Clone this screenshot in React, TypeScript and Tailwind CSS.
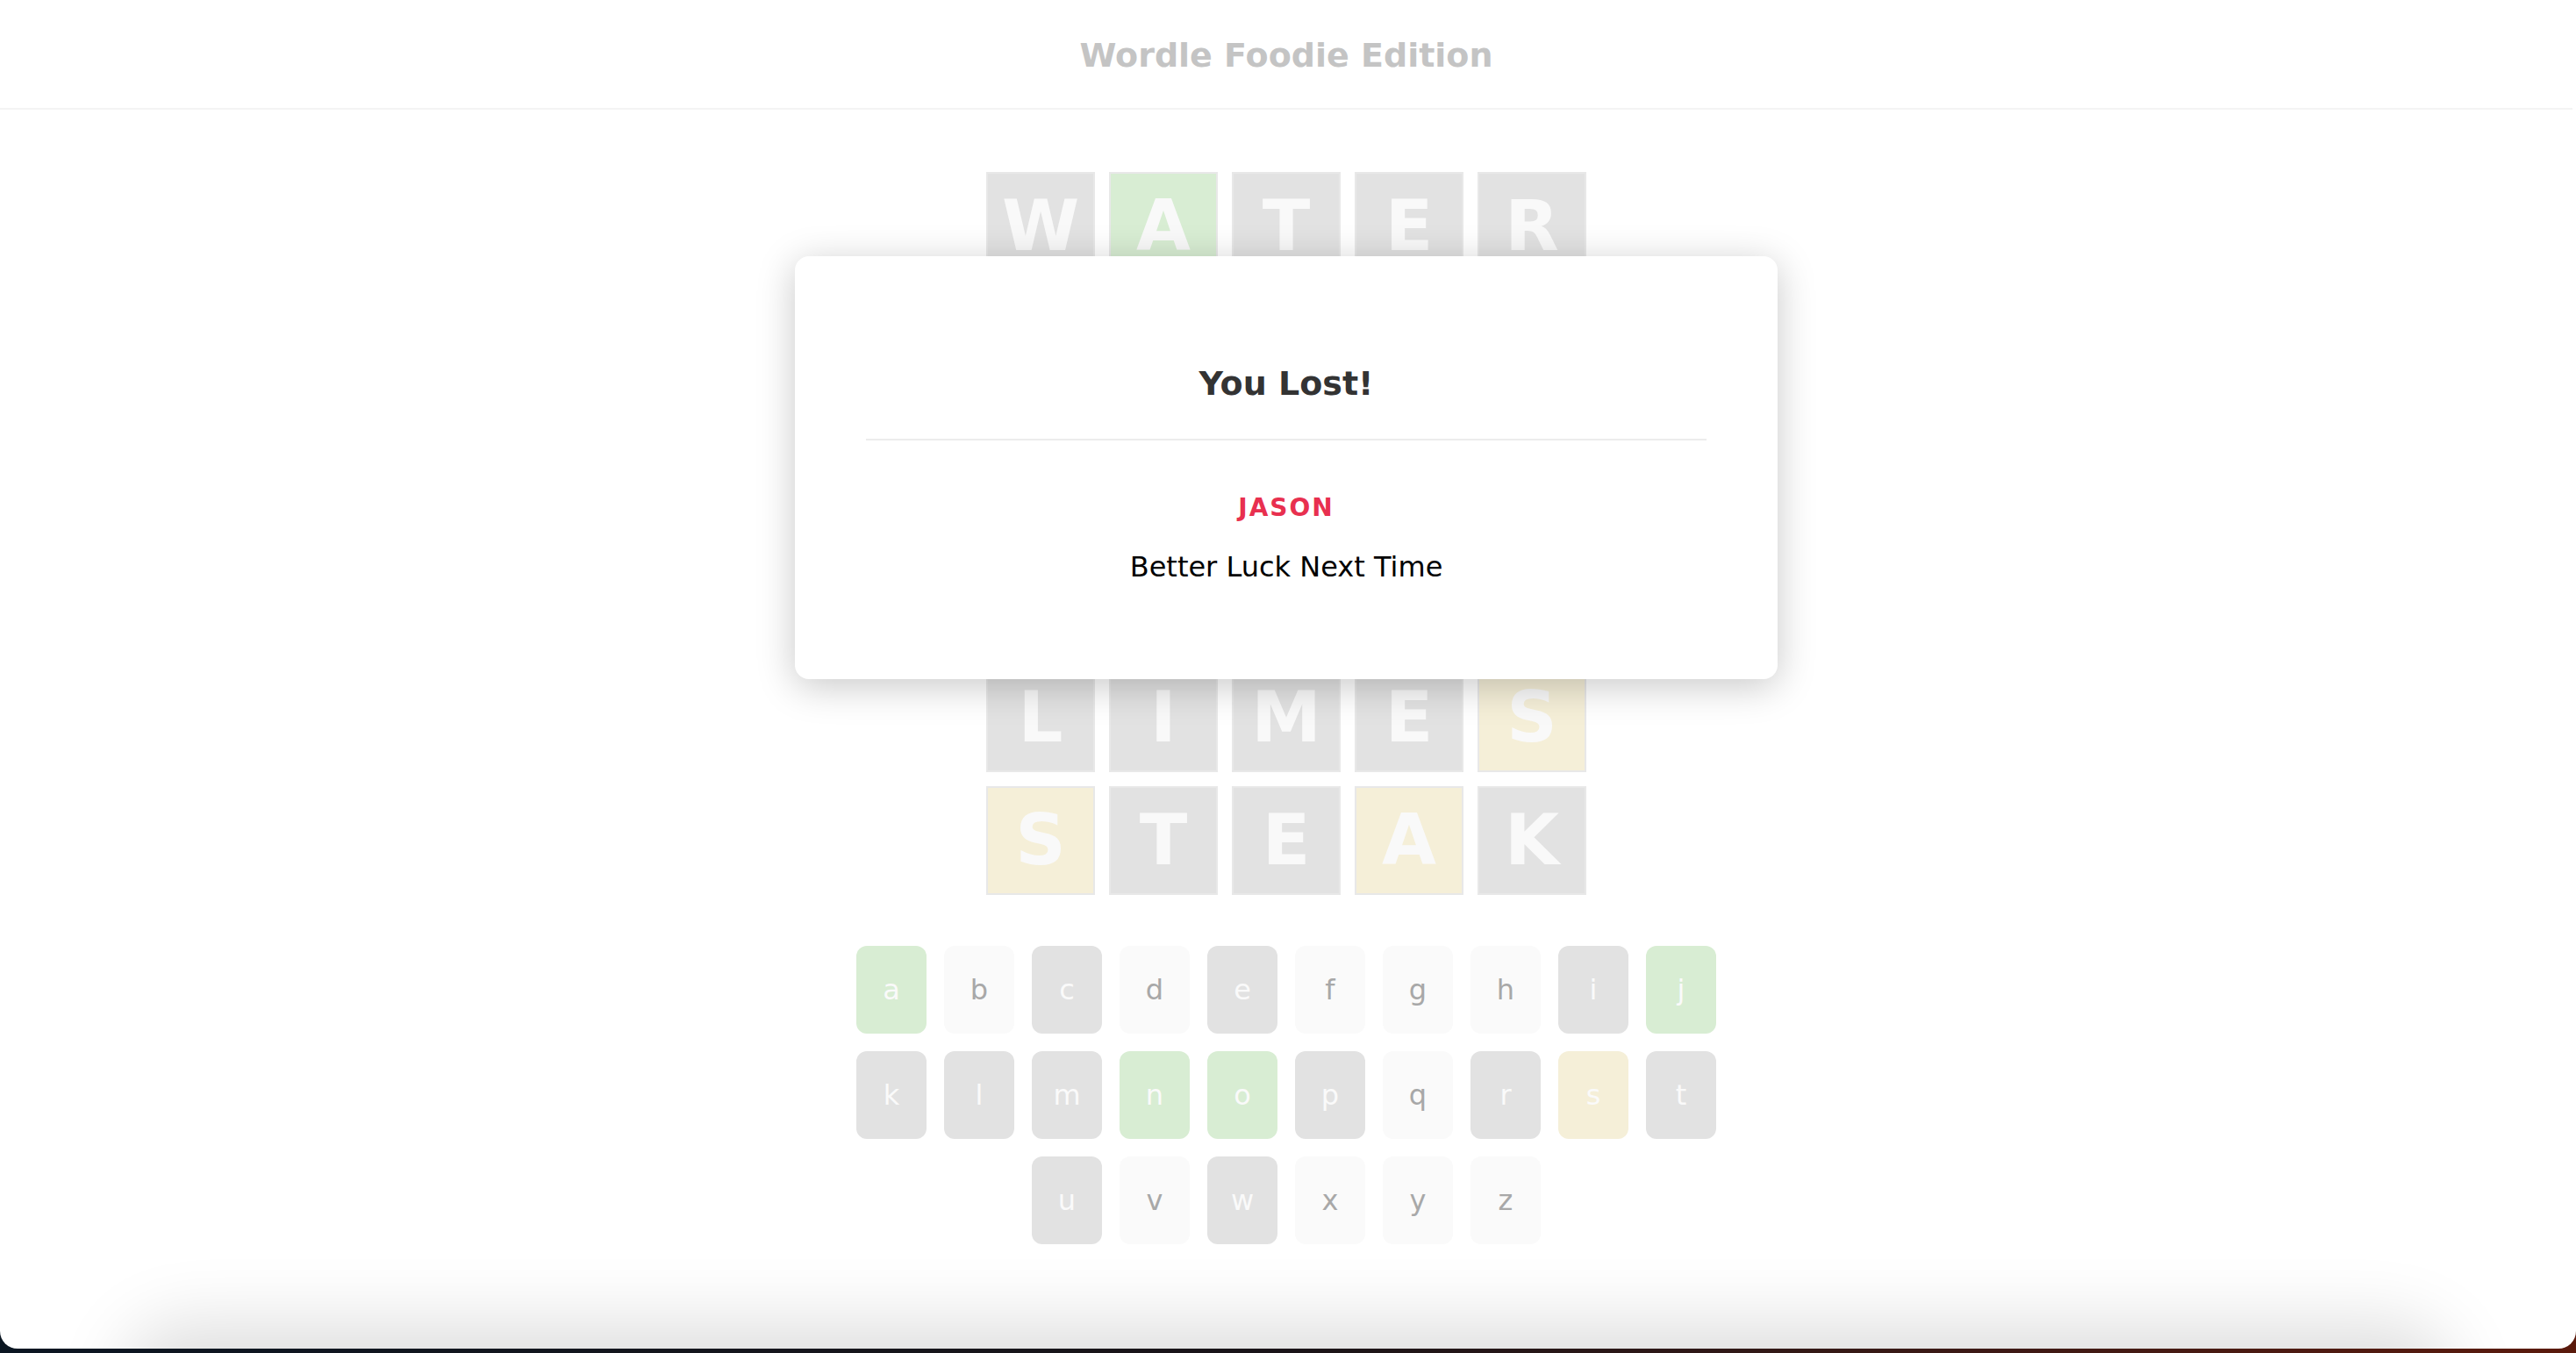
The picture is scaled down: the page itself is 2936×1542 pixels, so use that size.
type TileState = 'absent' | 'correct' | 'present';
type KeyState = 'unused' | 'absent' | 'correct' | 'present';

const guesses: { letter: string; state: TileState }[][] = [
    [
        { letter: 'W', state: 'absent' },
        { letter: 'A', state: 'correct' },
        { letter: 'T', state: 'absent' },
        { letter: 'E', state: 'absent' },
        { letter: 'R', state: 'absent' },
    ],
    [
        { letter: 'C', state: 'absent' },
        { letter: 'U', state: 'absent' },
        { letter: 'P', state: 'absent' },
        { letter: 'O', state: 'correct' },
        { letter: 'N', state: 'correct' },
    ],
    [
        { letter: 'J', state: 'correct' },
        { letter: 'A', state: 'correct' },
        { letter: 'M', state: 'absent' },
        { letter: 'O', state: 'correct' },
        { letter: 'N', state: 'correct' },
    ],
    [
        { letter: 'P', state: 'absent' },
        { letter: 'I', state: 'absent' },
        { letter: 'L', state: 'absent' },
        { letter: 'E', state: 'absent' },
        { letter: 'S', state: 'present' },
    ],
    [
        { letter: 'L', state: 'absent' },
        { letter: 'I', state: 'absent' },
        { letter: 'M', state: 'absent' },
        { letter: 'E', state: 'absent' },
        { letter: 'S', state: 'present' },
    ],
    [
        { letter: 'S', state: 'present' },
        { letter: 'T', state: 'absent' },
        { letter: 'E', state: 'absent' },
        { letter: 'A', state: 'present' },
        { letter: 'K', state: 'absent' },
    ],
];

const keyRows: { key: string; state: KeyState }[][] = [
    [
        { key: 'a', state: 'correct' },
        { key: 'b', state: 'unused' },
        { key: 'c', state: 'absent' },
        { key: 'd', state: 'unused' },
        { key: 'e', state: 'absent' },
        { key: 'f', state: 'unused' },
        { key: 'g', state: 'unused' },
        { key: 'h', state: 'unused' },
        { key: 'i', state: 'absent' },
        { key: 'j', state: 'correct' },
    ],
    [
        { key: 'k', state: 'absent' },
        { key: 'l', state: 'absent' },
        { key: 'm', state: 'absent' },
        { key: 'n', state: 'correct' },
        { key: 'o', state: 'correct' },
        { key: 'p', state: 'absent' },
        { key: 'q', state: 'unused' },
        { key: 'r', state: 'absent' },
        { key: 's', state: 'present' },
        { key: 't', state: 'absent' },
    ],
    [
        { key: 'u', state: 'absent' },
        { key: 'v', state: 'unused' },
        { key: 'w', state: 'absent' },
        { key: 'x', state: 'unused' },
        { key: 'y', state: 'unused' },
        { key: 'z', state: 'unused' },
    ],
];

const tileBg: Record<TileState, string> = {
    absent: 'bg-[#e2e2e2]',
    correct: 'bg-[#d8edd3]',
    present: 'bg-[#f5efd8]',
};

const keyStyle: Record<KeyState, string> = {
    unused: 'bg-[#fafafa] text-[#a8a8a8]',
    absent: 'bg-[#e2e2e2] text-[#fafafa]',
    correct: 'bg-[#d8edd3] text-[#fafafa]',
    present: 'bg-[#f5efd8] text-[#fafafa]',
};

function Tile({ letter, state }: { letter: string; state: TileState }) {
    return (
        <div
            className={`w-[124px] h-[124px] border-2 border-[#e8e8e8] flex items-center justify-center text-[80px] font-bold text-[#f9f9f9] ${tileBg[state]}`}
        >
            {letter}
        </div>
    );
}

function Key({ label, state }: { label: string; state: KeyState }) {
    return (
        <div
            className={`w-[80px] h-[100px] rounded-[12px] flex items-center justify-center text-[32px] ${keyStyle[state]}`}
        >
            {label}
        </div>
    );
}

function App() {
    return (
        <div className="h-[1542px] w-full bg-gradient-to-r from-[#0b1622] via-[#1a1418] to-[#5b1a0c] overflow-hidden">
            <div
                className="relative h-[1537px] w-full bg-white rounded-b-[20px] overflow-hidden"
                style={{ fontFamily: '"DejaVu Sans", Verdana, sans-serif' }}
            >
                <div className="pr-[4px]">
                    <header className="h-[125px] pt-[4px] border-b-2 border-[#f4f4f4] flex items-center justify-center">
                        <h1 className="text-[38px] font-bold text-[#c4c4c4]">Wordle Foodie Edition</h1>
                    </header>

                    <div className="pt-[71px] flex flex-col items-center gap-[16px]">
                        {guesses.map((row, r) => (
                            <div key={r} className="flex gap-[16px]">
                                {row.map((t, i) => (
                                    <Tile key={i} letter={t.letter} state={t.state} />
                                ))}
                            </div>
                        ))}
                    </div>

                    <div className="mt-[58px] flex flex-col items-center gap-[20px]">
                        {keyRows.map((row, r) => (
                            <div key={r} className="flex gap-[20px]">
                                {row.map((k) => (
                                    <Key key={k.key} label={k.key} state={k.state} />
                                ))}
                            </div>
                        ))}
                    </div>
                </div>

                {/* result modal */}
                <div className="absolute top-[292px] left-[906px] w-[1120px] h-[482px] bg-white rounded-[16px] shadow-[0_8px_44px_rgba(0,0,0,0.22)] px-[81px] flex flex-col items-center">
                    <h2 className="mt-[122px] text-[38px] leading-[46px] font-bold text-[#333333]">You Lost!</h2>
                    <div className="mt-[40px] h-[2px] w-full bg-[#ececec]" />
                    <p className="mt-[60px] text-[28px] leading-[34px] font-bold tracking-[2px] text-[#e8304f]">JASON</p>
                    <p className="mt-[31px] text-[32px] leading-[38px] text-black">Better Luck Next Time</p>
                </div>

                {/* shadow of something just below the fold */}
                <div className="absolute left-[170px] right-[170px] top-full h-[120px] rounded-[40px] shadow-[0_0_80px_30px_rgba(0,0,0,0.13)]" />
            </div>
        </div>
    );
}

export default App;
